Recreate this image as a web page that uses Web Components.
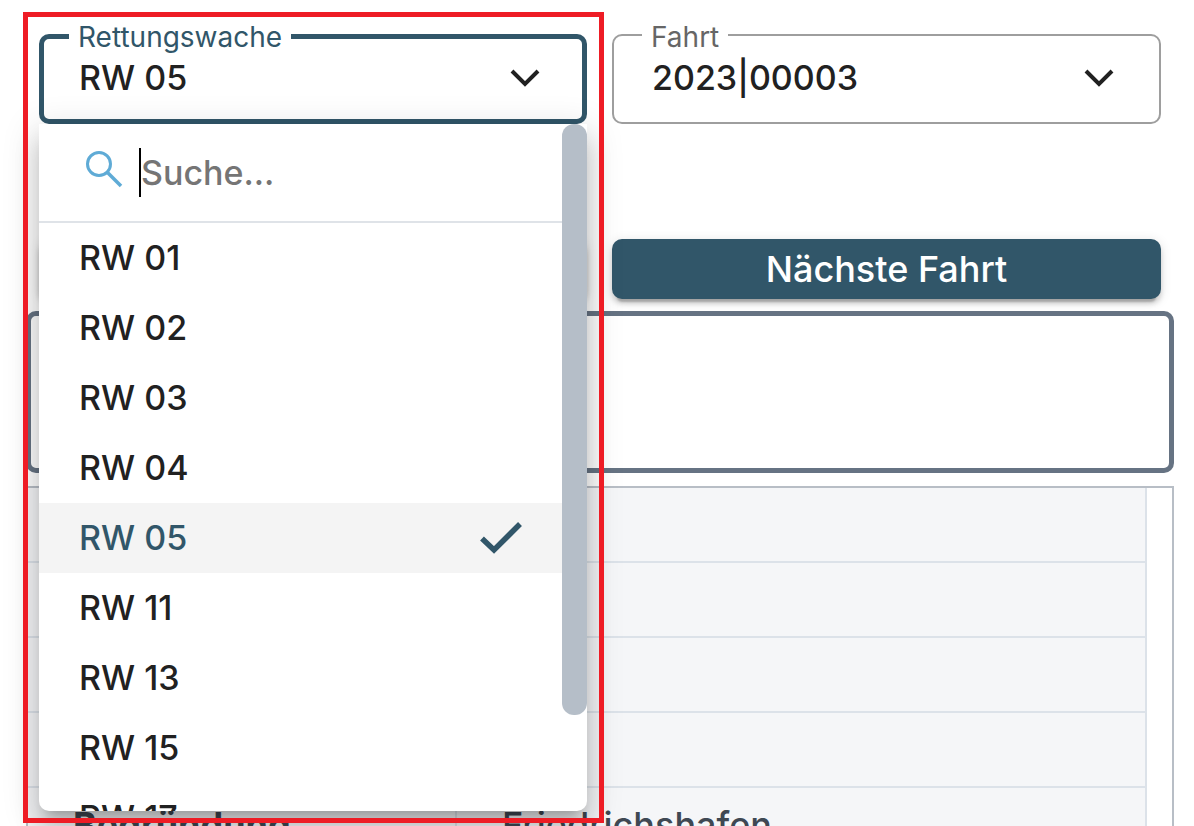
<!DOCTYPE html>
<html lang="de">
<head>
<meta charset="utf-8">
<meta name="viewport" content="width=device-width, initial-scale=1">
<title>Rettungswache</title>
<style>
  body {
    margin: 0;
    background: #fff;
    color: #212121;
    font: 500 34px/48px Inter, "Open Sans", sans-serif;
    --primary: #315669;
  }
</style>
</head>
<body>
<fahrt-page>
  <select-field slot="filter" label="Rettungswache" value="RW 05" open>
    <option-panel options='["RW 01","RW 02","RW 03","RW 04","RW 05","RW 11","RW 13","RW 15","RW 17"]' selected="RW 05"></option-panel>
  </select-field>
  <select-field slot="filter" label="Fahrt" value="2023|00003"></select-field>
  <action-button slot="action"></action-button>
  <action-button slot="action">Nächste Fahrt</action-button>
  <info-box></info-box>
  <data-table rows='[["",""],["",""],["",""],["",""],["Begründung","Friedrichshafen"]]'></data-table>
</fahrt-page>

<script>
class FahrtPage extends HTMLElement {
  constructor() {
    super();
    this.attachShadow({ mode: 'open' });
  }
  connectedCallback() {
    this.shadowRoot.innerHTML = `
      <style>
        :host { display: block; box-sizing: border-box; height: 100vh; overflow: hidden; padding: 34px 20px 0 26px; }
        .row { display: grid; grid-template-columns: 548fr 549fr; column-gap: 25px; padding: 0 13px; }
        .actions { margin: 115px 0 12px; }
      </style>
      <div class="row"><slot name="filter"></slot></div>
      <div class="row actions"><slot name="action"></slot></div>
      <slot></slot>
    `;
  }
}
customElements.define('fahrt-page', FahrtPage);

class SelectField extends HTMLElement {
  constructor() {
    super();
    this.attachShadow({ mode: 'open' });
  }
  connectedCallback() {
    const label = this.getAttribute('label');
    const value = this.getAttribute('value');
    this.shadowRoot.innerHTML = `
      <style>
        :host { display: block; position: relative; min-width: 0; }
        .field {
          display: flex;
          flex-direction: column;
          box-sizing: border-box;
          height: 90px;
          padding: 3px 45px 17px 38px;
          border: 2px solid #9e9e9e;
          border-radius: 10px;
        }
        :host([open]) .field {
          padding: 0 42px 14px 35px;
          border: 5px solid var(--primary);
        }
        label {
          align-self: flex-start;
          margin: -18px 0 0 -10px;
          padding: 0 9px;
          background: #fff;
          color: #666;
          font-size: 28px;
          font-weight: 400;
          line-height: 32px;
        }
        :host([open]) label { color: var(--primary); }
        .control { display: grid; align-items: center; height: 50px; }
        .control > * { grid-area: 1 / 1; }
        select {
          appearance: none;
          width: 100%;
          margin: 0;
          padding: 0;
          border: 0;
          outline: 0;
          background: none;
          color: inherit;
          font: inherit;
        }
        svg { justify-self: end; pointer-events: none; }
      </style>
      <div class="field">
        <label for="control">${label}</label>
        <div class="control">
          <select id="control"><option>${value}</option></select>
          <svg width="30" height="20" viewBox="0 0 30 20" fill="none" stroke="#212121" stroke-width="4"><path d="M2 3 15 16 28 3"/></svg>
        </div>
      </div>
      <slot></slot>
    `;
  }
}
customElements.define('select-field', SelectField);

class OptionPanel extends HTMLElement {
  constructor() {
    super();
    this.attachShadow({ mode: 'open' });
  }
  connectedCallback() {
    const options = JSON.parse(this.getAttribute('options') || '[]');
    const selected = this.getAttribute('selected');
    const check = '<svg width="42" height="34" viewBox="0 0 42 34" fill="none" stroke="#315669" stroke-width="5.500"><path d="M2 17.500 14 29 40 3"/></svg>';
    const items = options.map(o =>
      `<li role="option" aria-selected="${o === selected}">${o}${o === selected ? check : ''}</li>`
    ).join('');
    this.shadowRoot.innerHTML = `
      <style>
        :host { position: absolute; z-index: 2; top: 90px; left: 0; right: 0; }
        .panel {
          display: flex;
          height: 687px;
          overflow: hidden;
          border-radius: 0 0 10px 10px;
          background: #fff;
          box-shadow: 0 12px 12px -8px rgba(0,0,0,.2), 0 20px 25px 2px rgba(0,0,0,.14), 0 8px 35px 5px rgba(0,0,0,.12);
        }
        .content { flex: 1; min-width: 0; }
        .search {
          display: flex;
          align-items: center;
          box-sizing: border-box;
          height: 99px;
          padding-left: 45px;
          border-bottom: 2px solid #dfe3e8;
        }
        .caret { width: 2px; height: 49px; margin-left: 15px; background: #000; }
        input {
          flex: 1;
          min-width: 0;
          padding: 0;
          border: 0;
          outline: 0;
          background: none;
          color: inherit;
          font: inherit;
        }
        input::placeholder { color: #757575; opacity: 1; }
        ul { margin: 0; padding: 0; list-style: none; }
        li {
          display: flex;
          align-items: center;
          justify-content: space-between;
          height: 70px;
          padding: 0 40px;
        }
        li[aria-selected="true"] { background: #f4f4f4; color: var(--primary); }
        .thumb { width: 25px; height: 591px; border-radius: 12px; background: #b5bec8; }
        /* marker around the field and its open list */
        .marker {
          position: absolute;
          inset: -112px -17px -12px -16px;
          border: 5px solid #ee1c25;
          pointer-events: none;
        }
      </style>
      <div class="panel">
        <div class="content">
          <div class="search">
            <svg width="40" height="49" viewBox="0 0 40 49" fill="none" stroke="#5fabd6" stroke-width="3"><circle cx="15" cy="16" r="11.500"/><path d="M23 24 37 38" stroke-width="3.500"/></svg>
            <span class="caret"></span>
            <input type="text" placeholder="Suche..." aria-label="Suche...">
          </div>
          <ul role="listbox">${items}</ul>
        </div>
        <div class="thumb"></div>
      </div>
      <div class="marker"></div>
    `;
  }
}
customElements.define('option-panel', OptionPanel);

class ActionButton extends HTMLElement {
  constructor() {
    super();
    this.attachShadow({ mode: 'open' });
  }
  connectedCallback() {
    this.shadowRoot.innerHTML = `
      <style>
        :host { display: block; }
        button {
          display: block;
          width: 100%;
          height: 60px;
          padding: 0;
          border: 0;
          border-radius: 10px;
          background: var(--primary);
          color: #fff;
          font: inherit;
          font-size: 36px;
          box-shadow: 0 8px 2px -5px rgba(0,0,0,.2), 0 5px 5px rgba(0,0,0,.14), 0 2px 12px rgba(0,0,0,.12);
        }
      </style>
      <button type="button"><slot></slot></button>
    `;
  }
}
customElements.define('action-button', ActionButton);

class InfoBox extends HTMLElement {
  constructor() {
    super();
    this.attachShadow({ mode: 'open' });
  }
  connectedCallback() {
    this.shadowRoot.innerHTML = `
      <style>
        :host {
          display: block;
          box-sizing: border-box;
          min-height: 162px;
          margin-bottom: 13px;
          border: 5px solid #667383;
          border-radius: 10px;
        }
      </style>
      <slot></slot>
    `;
  }
}
customElements.define('info-box', InfoBox);

class DataTable extends HTMLElement {
  constructor() {
    super();
    this.attachShadow({ mode: 'open' });
  }
  connectedCallback() {
    const rows = JSON.parse(this.getAttribute('rows') || '[]');
    const body = rows.map(([name, value]) =>
      `<tr><th scope="row">${name}</th><td>${value}</td></tr>`
    ).join('');
    this.shadowRoot.innerHTML = `
      <style>
        :host { display: block; padding-right: 25px; border: 2px solid #b8bec6; }
        table { width: 100%; border-spacing: 0; table-layout: fixed; color: #3f4853; font-size: 36px; }
        th, td {
          box-sizing: border-box;
          height: 75px;
          padding: 0 0 0 45px;
          border: solid #dce2e9;
          border-width: 0 2px 2px 0;
          background: #f5f6f8;
          text-align: left;
        }
        th { width: 429px; font-weight: 700; }
      </style>
      <table><tbody>${body}</tbody></table>
    `;
  }
}
customElements.define('data-table', DataTable);
</script>
</body>
</html>
